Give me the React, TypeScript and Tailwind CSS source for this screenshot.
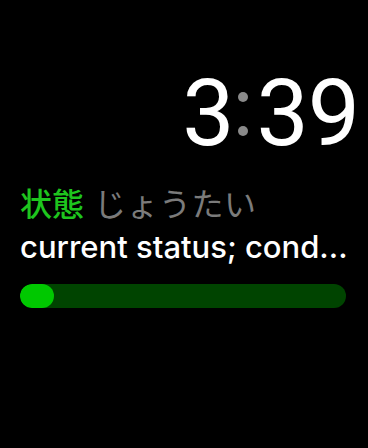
import React from "react";

export default function App() {
  return (
    <div className="w-[368px] h-[448px] bg-black text-white overflow-hidden flex flex-col" style={{ fontFamily: "Inter, 'Noto Sans CJK JP', sans-serif" }}>
      <div className="flex justify-end pr-[9px] pt-[66px]">
        <div className="flex items-center text-[93px] leading-[96px] font-normal tracking-[-1px]" style={{ fontFamily: "Roboto, sans-serif" }}>
          <span>3</span>
          <div className="flex flex-col items-center gap-[24px] ml-[5px] mr-[8px] mt-[-1px]">
            <div className="w-[10px] h-[10px] rounded-full bg-[#8a8a8a]" />
            <div className="w-[10px] h-[10px] rounded-full bg-[#8a8a8a]" />
          </div>
          <span>39</span>
        </div>
      </div>
      <div className="px-[20px] mt-[20px]">
        <div className="text-[32px] leading-[40px] whitespace-nowrap" style={{ fontFamily: "'Noto Sans CJK JP', sans-serif" }}>
          <span className="text-[#1ec51e] font-medium">状態</span>
          <span className="text-[#7b7b7b] ml-[10px] tracking-[0.5px]">じょうたい</span>
        </div>
        <div className="mt-[6px] text-[31px] leading-[38px] font-medium whitespace-nowrap overflow-hidden text-ellipsis">
          current status; cond...
        </div>
        <div className="mt-[18px] h-[24px] w-[326px] rounded-full bg-[#004400] overflow-hidden">
          <div className="h-full w-[34px] rounded-full bg-[#00c800]" />
        </div>
      </div>
    </div>
  );
}
